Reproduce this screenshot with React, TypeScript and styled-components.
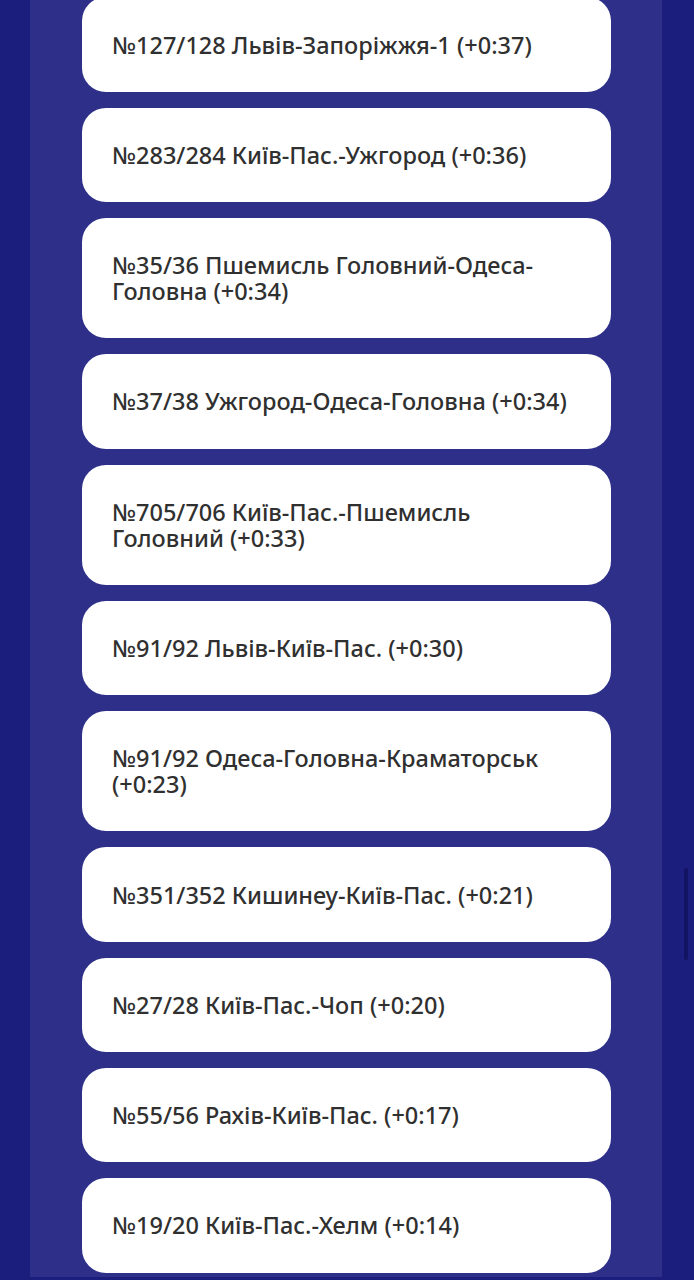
import React from "react";
import styled, { createGlobalStyle } from "styled-components";

const GlobalStyle = createGlobalStyle`
  html, body {
    margin: 0;
    padding: 0;
    background: #1c1e7d;
    overflow: hidden;
  }
  * { box-sizing: border-box; }
`;

type Train = { id: string; route: string; delay: string };

const trains: Train[] = [
  { id: "№127/128", route: "Львів-Запоріжжя-1", delay: "+0:37" },
  { id: "№283/284", route: "Київ-Пас.-Ужгород", delay: "+0:36" },
  { id: "№35/36", route: "Пшемисль Головний-Одеса-Головна", delay: "+0:34" },
  { id: "№37/38", route: "Ужгород-Одеса-Головна", delay: "+0:34" },
  { id: "№705/706", route: "Київ-Пас.-Пшемисль Головний", delay: "+0:33" },
  { id: "№91/92", route: "Львів-Київ-Пас.", delay: "+0:30" },
  { id: "№91/92", route: "Одеса-Головна-Краматорськ", delay: "+0:23" },
  { id: "№351/352", route: "Кишинеу-Київ-Пас.", delay: "+0:21" },
  { id: "№27/28", route: "Київ-Пас.-Чоп", delay: "+0:20" },
  { id: "№55/56", route: "Рахів-Київ-Пас.", delay: "+0:17" },
  { id: "№19/20", route: "Київ-Пас.-Хелм", delay: "+0:14" },
];

const Page = styled.div`
  height: 1280px;
  padding: 0 32px 0 30px;
  background: #1c1e7d;
  overflow: hidden;
`;

const Panel = styled.main`
  height: 100%;
  background: #2d2f89;
  padding: 0 51px 0 52px;
`;

const List = styled.ul`
  list-style: none;
  margin: -2.6px 0 0;
  padding: 0;
  display: flex;
  flex-direction: column;
  gap: 16px;
`;

const Card = styled.li`
  background: #ffffff;
  border-radius: 24px;
  padding: 34.15px 30px 34.15px 30px;
  font-family: "Noto Sans", "Open Sans", sans-serif;
  font-weight: 500;
  font-size: 23.5px;
  line-height: 26px;
  color: #303030;
`;

const ScrollThumb = styled.div`
  position: fixed;
  top: 868px;
  right: 6px;
  width: 4px;
  height: 92px;
  border-radius: 2px;
  background: #121463;
`;

export default function App() {
  return (
    <>
      <GlobalStyle />
      <Page>
        <Panel>
          <List>
            {trains.map((t, i) => (
              <Card key={i}>
                {t.id} {t.route} ({t.delay})
              </Card>
            ))}
          </List>
        </Panel>
      </Page>
      <ScrollThumb />
    </>
  );
}
